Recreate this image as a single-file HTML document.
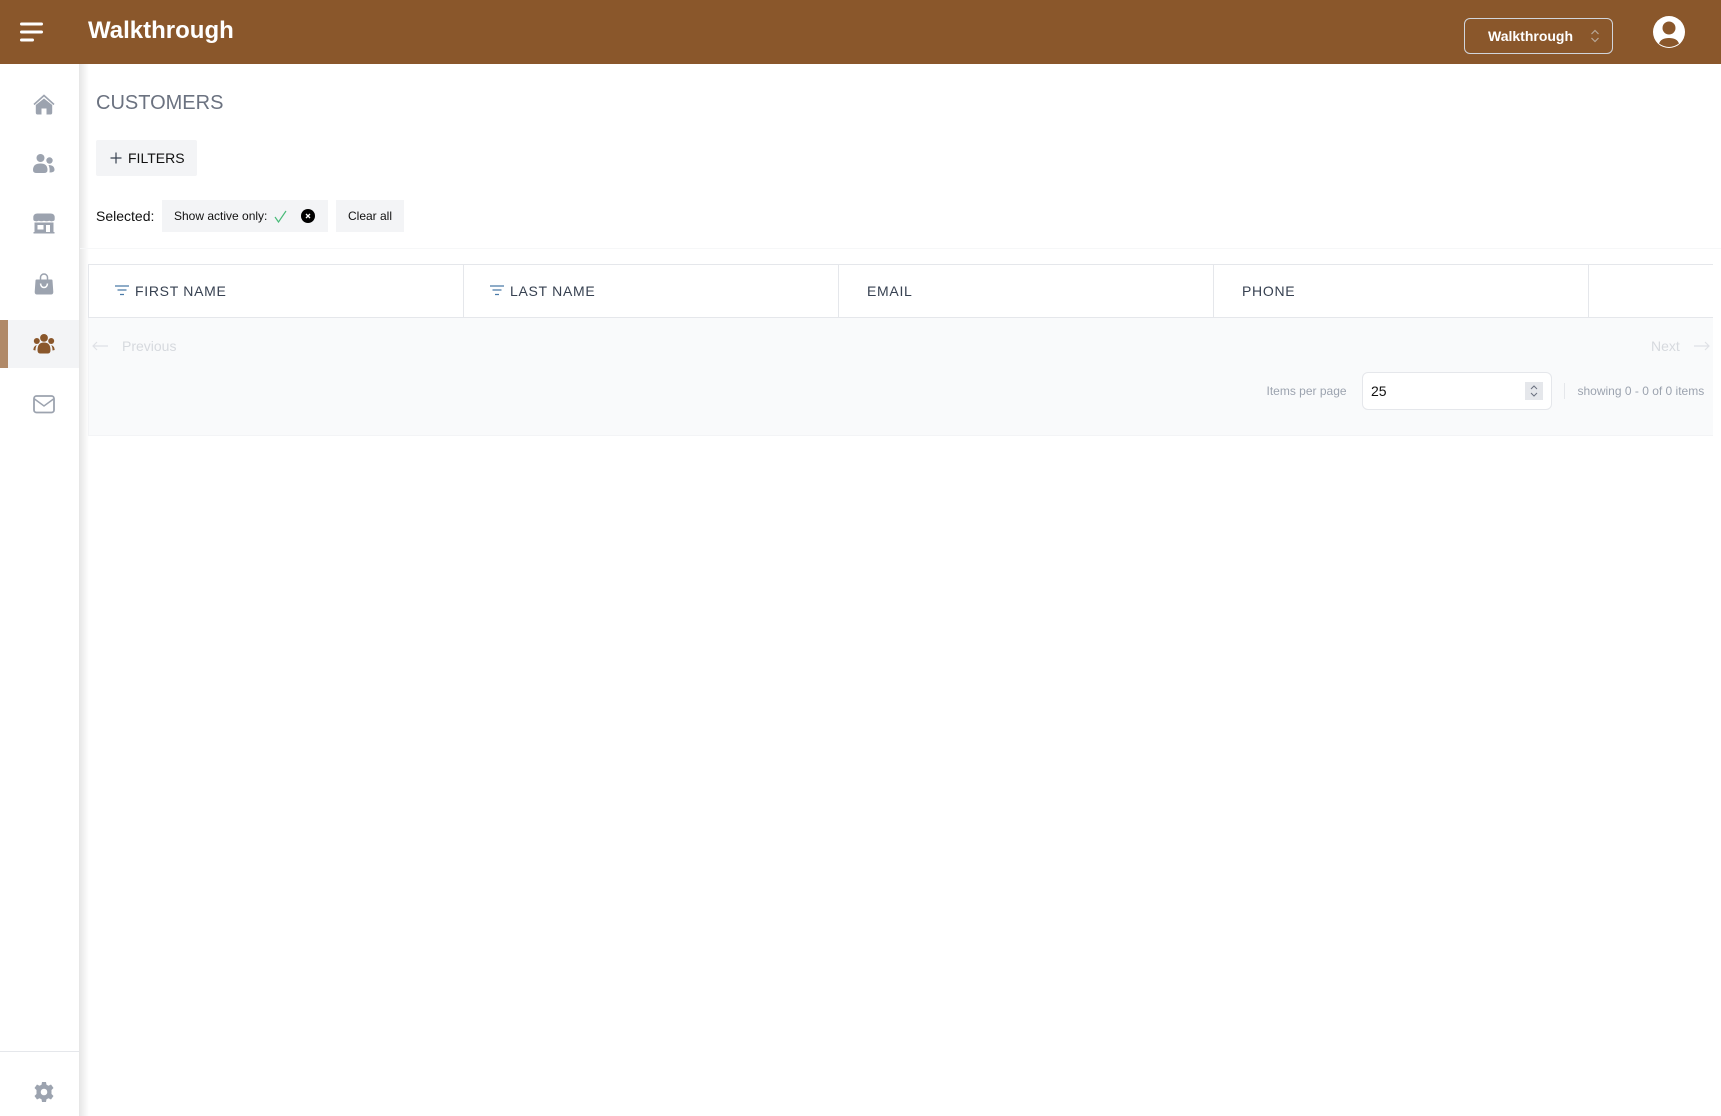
<!DOCTYPE html>
<html>
<head>
<meta charset="utf-8">
<style>
html,body{margin:0;padding:0;width:1721px;height:1116px;overflow:hidden;background:#fff;font-family:"Liberation Sans",sans-serif}
.a{position:absolute}
.t{position:absolute;white-space:nowrap;line-height:20px}
svg{position:absolute;display:block}
</style>
</head>
<body>
<div class="a" style="left:0;top:0;width:1721px;height:64px;background:#8A572B"></div>
<svg style="left:20px;top:22px" width="23" height="20" viewBox="0 0 23 20"><g fill="none" stroke="#fff" stroke-width="3" stroke-linecap="round"><path d="M1.500 2H21.500M1.500 10H21.500M1.500 18H12.500"/></g></svg>
<div class="t" style="left:88px;top:17px;font-size:24px;line-height:28px;font-weight:700;color:#fff">Walkthrough</div>
<div class="a" style="left:1464px;top:18px;width:147px;height:34px;border:1px solid #d1d5db;border-radius:6px"></div>
<div class="t" style="left:1488px;top:26px;font-size:14px;font-weight:700;color:#fff">Walkthrough</div>
<svg style="left:1590px;top:29px" width="10" height="14" viewBox="0 0 10 14"><path d="M1.500 5L5 1.500L8.500 5M1.500 9L5 12.500L8.500 9" fill="none" stroke="#b8a898" stroke-width="1.200"/></svg>
<svg style="left:1653px;top:16px" width="32" height="32" viewBox="0 0 32 32"><circle cx="16" cy="16" r="16" fill="#fff"/><circle cx="16" cy="12" r="6.500" fill="#8A572B"/><path d="M6 27.500Q8 22 16 22Q24 22 26 27.500Q21 31 16 31Q11 31 6 27.500Z" fill="#8A572B"/></svg>

<div class="a" style="left:79px;top:64px;width:10px;height:1052px;background:linear-gradient(90deg,#e6e6e6,#fff)"></div>
<div class="a" style="left:0;top:320px;width:79px;height:48px;background:#F3F4F6"></div>
<div class="a" style="left:0;top:320px;width:8px;height:48px;background:#B08968"></div>
<svg style="left:33px;top:94px" width="22" height="21" viewBox="0 0 22 21"><path d="M11 4.500L2.800 11V18.500Q2.800 20.500 4.500 20.500H8.500V14.500H13.500V20.500H17.500Q19.200 20.500 19.200 18.500V11Z" fill="#9CA3AF"/><path d="M1 10.500L11 1.500L21 10.500" fill="none" stroke="#9CA3AF" stroke-width="1.600"/></svg>
<svg style="left:33px;top:153px" width="22" height="21" viewBox="0 0 22 21"><circle cx="7.500" cy="5" r="4" fill="#9CA3AF"/><circle cx="16.500" cy="7.500" r="3.200" fill="#9CA3AF"/><path d="M0 17Q0 10.500 7.500 10.500Q14.500 10.500 14.500 17Q14.500 20 11 20H3.500Q0 20 0 17Z" fill="#9CA3AF"/><path d="M15.500 12Q21.500 12 21.500 17Q21.500 19.500 16.500 19.500Q17 15 15.500 12Z" fill="#9CA3AF"/></svg>
<svg style="left:33px;top:213px" width="22" height="21" viewBox="0 0 22 21"><path d="M4.500 .5H17.500Q21.700 .5 21.700 4.500V6Q21.700 8 20 8Q18.500 8.800 16.300 7.800Q13.500 8.800 11 7.800Q8.500 8.800 5.700 7.800Q3.500 8.800 2 8Q.3 8 .3 6V4.500Q.3 .5 4.500 .5Z" fill="#9CA3AF"/><path fill-rule="evenodd" d="M1.500 9.500H20.500V19H21.500V20.500H.5V19H1.500ZM4.500 12V16.500H10.500V12ZM13 12V19H17V12Z" fill="#9CA3AF"/></svg>
<svg style="left:34px;top:273px" width="20" height="22" viewBox="0 0 20 22"><path d="M6.500 7V4.500A3.500 3.500 0 0 1 13.500 4.500V7" fill="none" stroke="#9CA3AF" stroke-width="1.500"/><path d="M2.500 6.500H17.500Q18.500 6.500 18.500 7.500L19.300 19Q19.300 21.500 17 21.500H3Q.7 21.500 .7 19L1.500 7.500Q1.500 6.500 2.500 6.500Z" fill="#9CA3AF"/><path d="M6.500 10.500Q7 14.500 10 14.500Q13 14.500 13.500 10.500" fill="none" stroke="#fff" stroke-width="1.500"/></svg>
<svg style="left:33px;top:334px" width="22" height="20" viewBox="0 0 22 20"><g fill="#8A572B"><circle cx="11" cy="3.900" r="3.900"/><circle cx="3.800" cy="7" r="3"/><circle cx="18.200" cy="7" r="3"/><path d="M11 8.500Q17.500 8.500 17.500 16Q17.500 19.500 15 19.500H7Q4.500 19.500 4.500 16Q4.500 8.500 11 8.500Z"/><path d="M.3 16Q.6 12 3.800 11Q2.500 13 2.500 16.500Z"/><path d="M21.700 16Q21.400 12 18.200 11Q19.500 13 19.500 16.500Z"/></g></svg>
<svg style="left:33px;top:395px" width="22" height="19" viewBox="0 0 22 19"><rect x="1" y="1" width="20" height="16.500" rx="2.500" fill="none" stroke="#9CA3AF" stroke-width="1.800"/><path d="M1.500 4L11 11L20.500 4" fill="none" stroke="#9CA3AF" stroke-width="1.500"/></svg>
<div class="a" style="left:0;top:1051px;width:79px;height:1px;background:#E5E7EB"></div>
<svg style="left:34px;top:1082px" width="20" height="20" viewBox="0 0 20 20"><path fill="#9CA3AF" fill-rule="evenodd" d="M8 0H12L12.500 2.700L14.500 3.700L17 2.500L19.500 6L17.500 8L17.500 12L19.500 14L17 17.500L14.500 16.300L12.500 17.300L12 20H8L7.500 17.300L5.500 16.300L3 17.500L.5 14L2.500 12V8L.5 6L3 2.500L5.500 3.700L7.500 2.700ZM10 6.700A3.300 3.300 0 1 0 10 13.300A3.300 3.300 0 1 0 10 6.700Z"/></svg>

<div class="t" style="left:96px;top:91px;font-size:20px;line-height:24px;color:#6B7280">CUSTOMERS</div>
<div class="a" style="left:96px;top:140px;width:101px;height:36px;background:#F3F4F6;border-radius:2px"></div>
<svg style="left:110px;top:152px" width="12" height="12" viewBox="0 0 12 12"><path d="M6 .5V11.500M.5 6H11.500" stroke="#374151" stroke-width="1.200"/></svg>
<div class="t" style="left:128px;top:148px;font-size:14px;color:#111">FILTERS</div>
<div class="t" style="left:96px;top:206px;font-size:14px;color:#111">Selected:</div>
<div class="a" style="left:162px;top:200px;width:166px;height:32px;background:#F3F4F6"></div>
<div class="t" style="left:174px;top:206px;font-size:12px;color:#111">Show active only:</div>
<svg style="left:274px;top:210px" width="13" height="13" viewBox="0 0 13 13"><path d="M1 7L4.500 12L12 1" fill="none" stroke="#48BB78" stroke-width="1.200"/></svg>
<svg style="left:301px;top:209px" width="14" height="14" viewBox="0 0 14 14"><circle cx="7" cy="7" r="7" fill="#000"/><path d="M5 5L9 9M9 5L5 9" stroke="#fff" stroke-width="1.300"/></svg>
<div class="a" style="left:336px;top:200px;width:68px;height:32px;background:#F3F4F6"></div>
<div class="t" style="left:348px;top:206px;font-size:12px;color:#111">Clear all</div>
<div class="a" style="left:80px;top:248px;width:1641px;height:1px;background:#f6f7f8"></div>

<div class="a" style="left:88px;top:318px;width:1625px;height:118px;background:#F9FAFB;box-shadow:inset 1px 0 0 #f3f4f6,inset 0 -1px 0 #f3f4f6"></div>
<div class="a" style="left:88px;top:264px;width:1625px;height:52px;background:#fff;border-top:1px solid #E5E7EB;border-bottom:1px solid #E5E7EB"></div>
<div class="a" style="left:88px;top:264px;width:1px;height:54px;background:#E5E7EB"></div>
<div class="a" style="left:463px;top:264px;width:1px;height:54px;background:#E5E7EB"></div>
<div class="a" style="left:838px;top:264px;width:1px;height:54px;background:#E5E7EB"></div>
<div class="a" style="left:1213px;top:264px;width:1px;height:54px;background:#E5E7EB"></div>
<div class="a" style="left:1588px;top:264px;width:1px;height:54px;background:#E5E7EB"></div>
<svg style="left:115px;top:285px" width="14" height="11" viewBox="0 0 14 11"><path d="M0 1H14M2.500 5H11.500M5 9.500H9" stroke="#4B7BA8" stroke-width="1.200"/></svg>
<div class="t" style="left:135px;top:281px;font-size:14px;letter-spacing:.7px;color:#374151">FIRST NAME</div>
<svg style="left:490px;top:285px" width="14" height="11" viewBox="0 0 14 11"><path d="M0 1H14M2.500 5H11.500M5 9.500H9" stroke="#4B7BA8" stroke-width="1.200"/></svg>
<div class="t" style="left:510px;top:281px;font-size:14px;letter-spacing:.7px;color:#374151">LAST NAME</div>
<div class="t" style="left:867px;top:281px;font-size:14px;letter-spacing:.7px;color:#374151">EMAIL</div>
<div class="t" style="left:1242px;top:281px;font-size:14px;letter-spacing:.7px;color:#374151">PHONE</div>

<svg style="left:92px;top:340px" width="16" height="12" viewBox="0 0 16 12"><path d="M16 6H1M5 2L1 6L5 10" fill="none" stroke="#DFE1E6" stroke-width="1.200"/></svg>
<div class="t" style="left:122px;top:336px;font-size:14px;color:#D6D9DE">Previous</div>
<div class="t" style="left:1651px;top:336px;font-size:14px;color:#D6D9DE">Next</div>
<svg style="left:1694px;top:340px" width="16" height="12" viewBox="0 0 16 12"><path d="M0 6H15M11 2L15 6L11 10" fill="none" stroke="#DFE1E6" stroke-width="1.200"/></svg>
<div class="t" style="left:1266.500px;top:381px;font-size:12px;color:#9CA3AF">Items per page</div>
<div class="a" style="left:1362px;top:372px;width:188px;height:36px;background:#fff;border:1px solid #E5E7EB;border-radius:6px"></div>
<div class="t" style="left:1371px;top:381px;font-size:14px;color:#111">25</div>
<div class="a" style="left:1525px;top:382px;width:18px;height:18px;background:#E5E7EB"></div>
<svg style="left:1529px;top:384px" width="10" height="14" viewBox="0 0 10 14"><path d="M2 5L5 2L8 5M2 9L5 12L8 9" fill="none" stroke="#6B7280" stroke-width="1"/></svg>
<div class="a" style="left:1564px;top:383px;width:1px;height:16px;background:#E5E7EB"></div>
<div class="t" style="left:1577.500px;top:381px;font-size:12px;color:#9CA3AF">showing 0 - 0 of 0 items</div>
</body>
</html>
